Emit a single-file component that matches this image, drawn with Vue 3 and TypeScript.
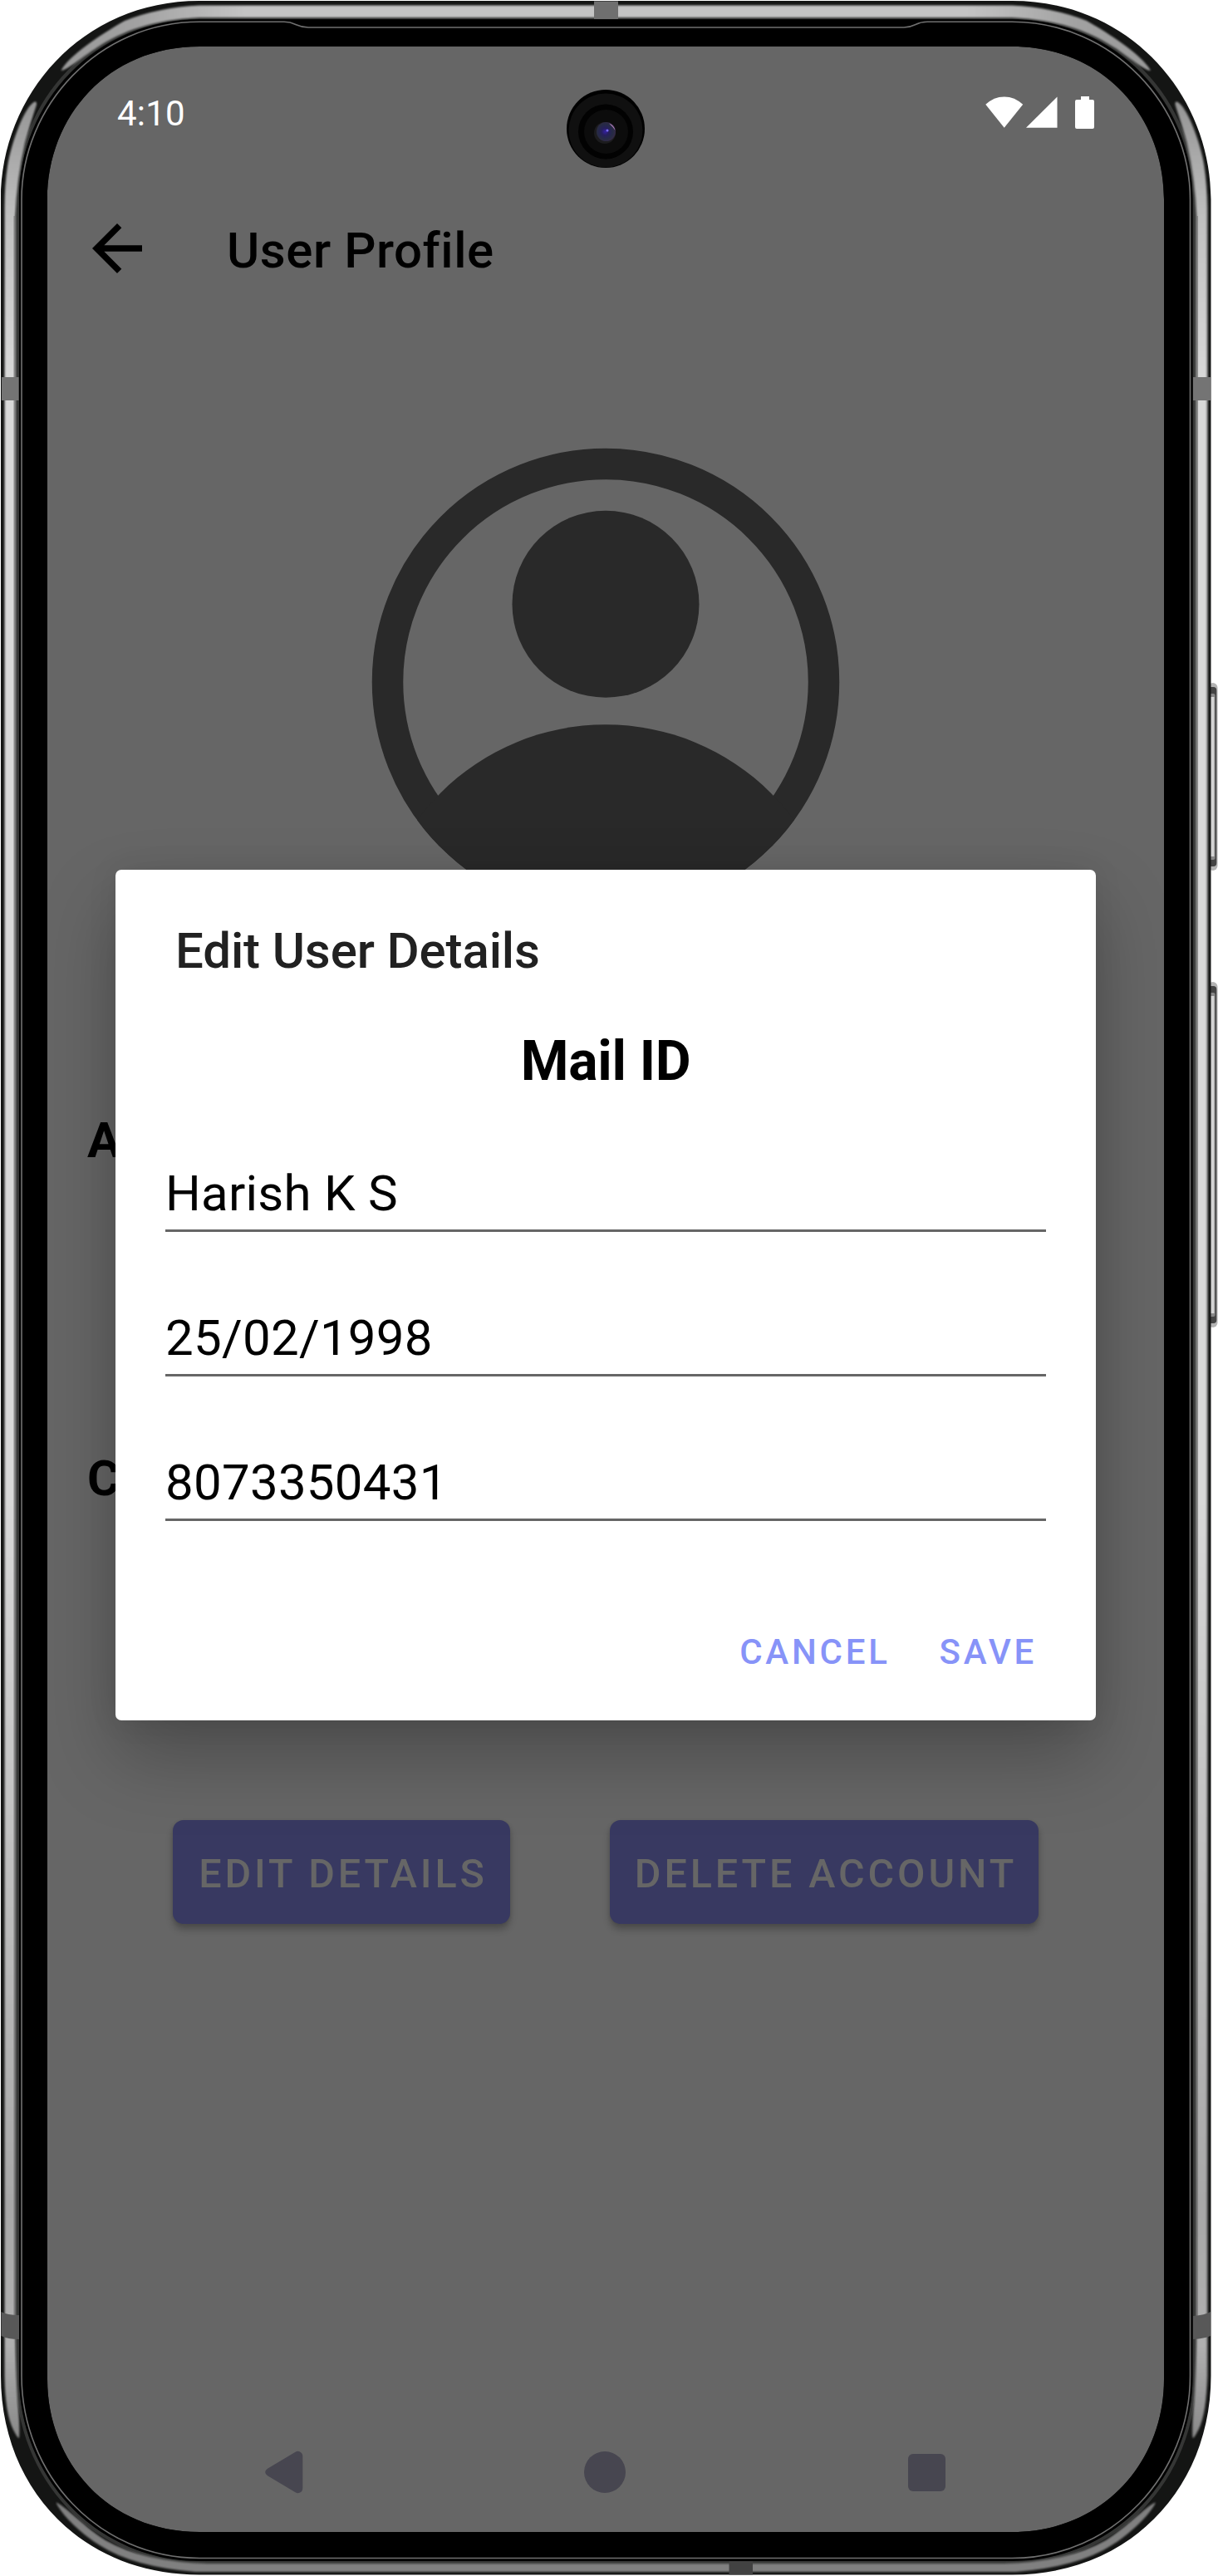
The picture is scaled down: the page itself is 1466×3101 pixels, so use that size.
<script setup lang="ts">
interface Field {
  id: string
  value: string
}

const fields: Field[] = [
  { id: 'name', value: 'Harish K S' },
  { id: 'dob', value: '25/02/1998' },
  { id: 'phone', value: '8073350431' },
]

const sideKeys = [
  { y: 822, h: 226 },
  { y: 1182, h: 416 },
]
</script>

<template>
  <div class="phone">
    <div class="screen">
      <header class="status">
        <span class="time">4:10</span>
        <div class="status-icons">
          <svg width="46" height="38" viewBox="0 0 46 38"><path d="M0.3 9.8Q10 0.4 22.7 0.4T45.2 9.8L22.7 37.8Z" fill="#fff" /></svg>
          <svg class="signal" width="38" height="38" viewBox="0 0 38 38"><path d="M0 37.7L37.5 0.5V37.7Z" fill="#fff" /></svg>
          <svg class="battery" width="23" height="39" viewBox="0 0 23 39"><path d="M7 0H17V4H21Q23 4 23 6V37Q23 39 21 39H2Q0 39 0 37V6Q0 4 2 4H7Z" fill="#fff" /></svg>
        </div>
      </header>

      <div class="appbar">
        <svg width="60" height="60" viewBox="4 4 16 16"><path d="M20 11H7.83l5.59-5.59L12 4l-8 8 8 8 1.41-1.41L7.83 13H20v-2z" fill="#000" /></svg>
        <h1>User Profile</h1>
      </div>

      <main class="profile">
        <svg class="avatar" width="564" height="564" viewBox="-282 -282 564 564">
          <defs><clipPath id="disc"><circle r="281.25" /></clipPath></defs>
          <circle r="262.5" fill="none" stroke="#292929" stroke-width="37.5" />
          <circle cy="-93.75" r="112.5" fill="#292929" />
          <circle cy="332.5" r="281.25" fill="#292929" clip-path="url(#disc)" />
        </svg>
        <div class="label first">A</div>
        <div class="label second">C</div>
        <div class="buttons">
          <button class="solid edit">EDIT DETAILS</button>
          <button class="solid delete">DELETE ACCOUNT</button>
        </div>
      </main>

      <nav class="navbar">
        <svg width="46" height="52" viewBox="0 0 46 52"><path d="M36.5 1.8Q39 0.3 41.5 1.2Q45.3 2.6 45.3 7V45Q45.3 49.4 41.5 50.8Q39 51.7 36.5 50.2L3 30.3Q0.2 28.5 0.2 26T3 21.7Z" fill="#474650" /></svg>
        <i class="home"></i>
        <i class="recent"></i>
      </nav>
    </div>

    <section class="dialog">
      <h2>Edit User Details</h2>
      <h3>Mail ID</h3>
      <div class="fields">
        <div v-for="f in fields" :key="f.id" class="field">{{ f.value }}</div>
      </div>
      <div class="actions">
        <button>CANCEL</button>
        <button>SAVE</button>
      </div>
    </section>

    <svg class="frame" width="1466" height="3101" viewBox="0 0 1466 3101">
      <defs>
        <linearGradient id="side" gradientUnits="userSpaceOnUse" x1="0" y1="120" x2="0" y2="2936">
          <stop offset="0" stop-color="#949494" />
          <stop offset="0.05" stop-color="#c0c0c0" />
          <stop offset="0.12" stop-color="#d8d8d8" />
          <stop offset="0.6" stop-color="#d8d8d8" />
          <stop offset="0.9" stop-color="#a8a8a8" />
          <stop offset="0.96" stop-color="#b0b0b0" />
          <stop offset="1" stop-color="#888" />
        </linearGradient>
        <linearGradient id="top" gradientUnits="userSpaceOnUse" x1="73" y1="0" x2="1385" y2="0">
          <stop offset="0" stop-color="#999" />
          <stop offset="0.07" stop-color="#a2a2a2" />
          <stop offset="0.17" stop-color="#c4c4c4" />
          <stop offset="0.83" stop-color="#c4c4c4" />
          <stop offset="0.93" stop-color="#a2a2a2" />
          <stop offset="1" stop-color="#999" />
        </linearGradient>
        <radialGradient id="lens" cx="0.45" cy="0.5" r="0.62">
          <stop offset="0" stop-color="#3420a0" />
          <stop offset="0.3" stop-color="#261f5c" />
          <stop offset="0.65" stop-color="#262b44" />
          <stop offset="1" stop-color="#3c2748" />
        </radialGradient>
        <filter id="soft" x="-20%" y="-20%" width="140%" height="140%"><feGaussianBlur stdDeviation="1" /></filter>
        <g id="half">
          <path d="M41.5 122.5C30 128 14 170 9 200Q5.500 222 5.500 250V2860Q6 2905 16 2925Q21 2935 23 2935Q24 2925 22 2900Q19 2865 18.500 2810V260Q20 215 30 172Q36 150 44 126Q44.500 121.500 41.500 122.500Z" fill="url(#side)" />
        </g>
      </defs>

      <!-- side keys -->
      <g v-for="k in sideKeys" :key="k.y">
        <rect x="1454" :y="k.y" width="11.500" :height="k.h" rx="6" fill="#b4b4b4" />
        <rect x="1454" :y="k.y + 5" width="10.300" :height="k.h - 10" rx="4" fill="#444" />
        <rect x="1454" :y="k.y + 13" width="8.500" :height="k.h - 26" rx="2" fill="#888" />
        <rect x="1454" :y="k.y + 17" width="7.500" :height="k.h - 34" fill="#d4d4d4" />
      </g>

      <!-- metal rim with the display cut out -->
      <path fill-rule="evenodd" fill="#141514" d="M240 1H1218C1360 1 1457.500 115 1457.500 240V2860C1457.500 2995 1360 3099.500 1218 3099.500H240C98 3099.500 1 2995 1 2860V240C1 115 98 1 240 1ZM240 56C130 56 57 140 57 240V2864C57 2964 130 3048 240 3048H1218C1328 3048 1401 2964 1401 2864V240C1401 140 1328 56 1218 56Z" />
      <path fill="none" stroke="#353635" stroke-width="4" d="M240 21H1218C1345 21 1437.500 122 1437.500 240V2860C1437.500 2982 1345 3084.500 1218 3084.500H240C113 3084.500 21 2982 21 2860V240C21 122 113 21 240 21Z" />
      <g filter="url(#soft)">
        <use href="#half" />
        <use href="#half" transform="translate(1458.500 0) scale(-1 1)" />
        <path d="M73.500 85C82 68 120 42 150 25Q190 9 240 6.500H1218Q1268 9 1308 25C1338 42 1376 68 1385 85C1378 86 1350 62 1341 57C1310 37 1275 24 1218 21H240C183 24 148 37 117 57C100 68 80 85 73.500 85Z" fill="url(#top)" />
        <path d="M67.500 3012.500C74 3028 100 3052 120 3064Q160 3090 235 3096H1223Q1298 3090 1338 3064C1358 3052 1384 3028 1391 3012.500C1383 3014 1355 3043 1331 3058Q1285 3084 1208 3086H250Q173 3084 127 3058C103 3043 75 3014 67.500 3012.500Z" fill="#808080" />
      </g>
      <path d="M17.500 260V2810M1441 260V2810" stroke="#777" stroke-width="2" opacity="0.7" />

      <!-- black bezel -->
      <path fill-rule="evenodd" fill="#000" d="M240 23.500H1218C1343 23.500 1435.500 124 1435.500 240V2860C1435.500 2980 1343 3083 1218 3083H240C115 3083 23 2980 23 2860V240C23 124 115 23.500 240 23.500ZM240 56C130 56 57 140 57 240V2864C57 2964 130 3048 240 3048H1218C1328 3048 1401 2964 1401 2864V240C1401 140 1328 56 1218 56Z" />
      <path fill="none" stroke="#707070" stroke-width="1.600" d="M240 26.300H342C356 26.300 357 33 371 33H1088C1102 33 1101 26.300 1116 26.300H1218C1340 26.300 1432.500 128 1432.500 240V2860C1432.500 2978 1340 3079.500 1218 3079.500H240C118 3079.500 26 2978 26 2860V240C26 128 118 26.300 240 26.300Z" />

      <!-- antenna bands -->
      <g>
        <path d="M2 454H22.500V482H2ZM1436 454H1457V482H1436Z" fill="#747474" />
        <path d="M1.500 2783Q9 2787 23 2787V2816Q9 2816 1.500 2812ZM1457 2783Q1450 2787 1436 2788V2816Q1450 2815 1457 2812Z" fill="#585858" />
        <rect x="715" y="1.500" width="29" height="21.500" fill="#6f6f6f" />
        <rect x="877.500" y="3083.500" width="28.500" height="16" fill="#424242" />
      </g>

      <!-- front camera -->
      <circle cx="729" cy="155" r="47" fill="#000" />
      <circle cx="729" cy="157" r="44.500" fill="#101010" />
      <circle cx="729" cy="158.500" r="33" fill="#020202" />
      <circle cx="729.500" cy="158.500" r="26.500" fill="#0c0c0c" />
      <circle cx="728" cy="160" r="13" fill="#1c1c1e" />
      <circle cx="729.500" cy="158.500" r="11.500" fill="url(#lens)" />
      <path d="M733 148.500A11.500 11.500 0 0 1 740.500 157Q738 153 733 148.500Z" fill="#b080b8" />
      <circle cx="731" cy="157" r="1.500" fill="#7a6cff" />
    </svg>
  </div>
</template>

<style>
body {
  margin: 0;
  background: #fff;
}
</style>

<style scoped>
.phone {
  position: relative;
  box-sizing: border-box;
  width: 1466px;
  height: 3101px;
  padding: 56px 65px 53px 57px;
  overflow: hidden;
  font-family: Roboto, sans-serif;
}
.screen {
  display: flex;
  flex-direction: column;
  width: 1344px;
  height: 2992px;
  overflow: hidden;
  border-radius: 140px;
  background: #666;
}
.frame {
  position: absolute;
  inset: 0;
  pointer-events: none;
}
svg {
  display: block;
  flex: none;
}
h1, h2, h3 {
  margin: 0;
}
.status {
  display: flex;
  align-items: center;
  justify-content: space-between;
  height: 158px;
  padding: 0 84px;
  color: #fff;
}
.time {
  margin-top: 3px;
  font-size: 42px;
  line-height: 50px;
  letter-spacing: 0.200px;
}
.status-icons {
  display: flex;
  align-items: center;
}
.signal {
  margin-left: 3px;
}
.battery {
  margin-left: 21px;
}
.appbar {
  display: flex;
  align-items: center;
  height: 170px;
  padding-left: 54px;
}
.appbar h1 {
  margin: 6px 0 0 102px;
  font-size: 60px;
  font-weight: 500;
  line-height: 70px;
  letter-spacing: 0.550px;
  color: #000;
}
.profile {
  flex: 1;
}
.avatar {
  margin: 155px auto 0;
}
.label {
  padding-left: 48px;
  font-size: 60px;
  font-weight: 700;
  line-height: 70px;
  color: #000;
}
.first {
  margin-top: 235px;
}
.second {
  margin-top: 337px;
}
.buttons {
  display: flex;
  gap: 120px;
  margin: 376px 0 0 151px;
}
button {
  padding: 0;
  border: 0;
  background: none;
  font-family: inherit;
  font-weight: 500;
  white-space: nowrap;
}
.solid {
  height: 125px;
  padding: 4px 0 0 4px;
  border-radius: 13px;
  background: #383961;
  box-shadow: 0 7px 8px rgba(0, 0, 0, 0.24), 0 1px 4px rgba(0, 0, 0, 0.1);
  color: #666;
  font-size: 48.500px;
  letter-spacing: 3.900px;
}
.edit {
  width: 406px;
}
.delete {
  width: 516px;
}
.navbar {
  display: flex;
  align-items: center;
  height: 144px;
  padding-left: 262px;
}
.home {
  width: 50px;
  height: 50px;
  margin-left: 338px;
  border-radius: 50%;
  background: #474650;
}
.recent {
  width: 45px;
  height: 45px;
  margin-left: 340px;
  border-radius: 6px;
  background: #474650;
}
.dialog {
  position: absolute;
  top: 1047px;
  left: 139px;
  box-sizing: border-box;
  width: 1180px;
  height: 1024px;
  padding: 63px 60px 0;
  border-radius: 7px;
  background: #fff;
  box-shadow: 0 44px 90px rgba(0, 0, 0, 0.26), 0 0 36px rgba(0, 0, 0, 0.08);
}
.dialog h2 {
  padding-left: 12px;
  font-size: 60px;
  font-weight: 500;
  line-height: 70px;
  letter-spacing: -0.120px;
  color: #212121;
}
.dialog h3 {
  margin-top: 58px;
  font-size: 66px;
  font-weight: 700;
  line-height: 80px;
  letter-spacing: -0.300px;
  text-align: center;
  color: #000;
}
.fields {
  display: flex;
  flex-direction: column;
  gap: 92px;
  margin-top: 83px;
}
.field {
  padding-top: 1px;
  padding-bottom: 8px;
  border-bottom: 3px solid #666;
  font-size: 60px;
  line-height: 70px;
  letter-spacing: 0.250px;
  color: #000;
}
.actions {
  display: flex;
  justify-content: flex-end;
  gap: 59px;
  margin-top: 133px;
  padding-right: 11px;
}
.actions button {
  color: #8793f8;
  font-size: 42px;
  line-height: 50px;
  letter-spacing: 3.750px;
}
</style>
